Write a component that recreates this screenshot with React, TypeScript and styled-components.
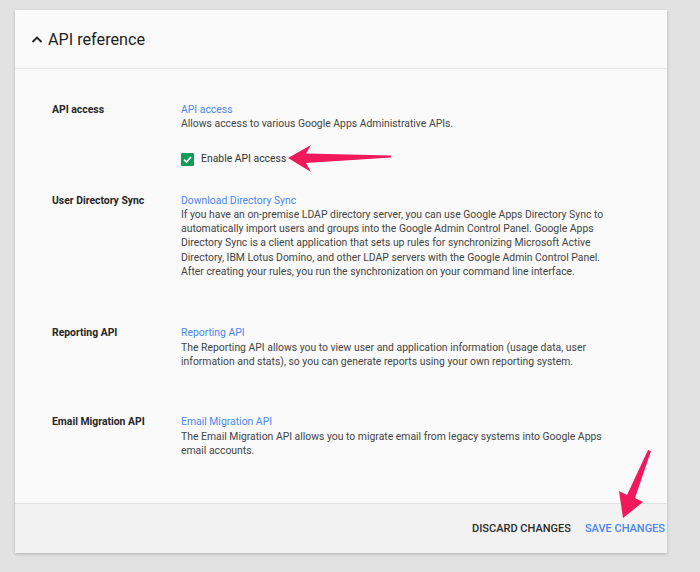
import React from "react";
import styled, { createGlobalStyle } from "styled-components";

const Global = createGlobalStyle`
  html, body { margin: 0; padding: 0; background: #e2e2e2; }
  body { font-family: Roboto, "Liberation Sans", Arial, sans-serif; }
`;

const Page = styled.div`
  position: relative;
  width: 700px;
  height: 572px;
  padding: 10px 33px 0 15px;
  box-sizing: border-box;
`;

const Card = styled.section`
  background: #fafafa;
  box-shadow: 0 1px 3px rgba(0, 0, 0, 0.22);
  display: flex;
  flex-direction: column;
`;

const Header = styled.header`
  height: 59px;
  display: flex;
  align-items: center;
  gap: 5px;
  padding: 1px 0 0 16px;
  border-bottom: 1px solid #e4e4e4;
  box-sizing: border-box;
`;

const Title = styled.h2`
  margin: 0;
  font-size: 16.2px;
  font-weight: 400;
  color: #212121;
`;

const Body = styled.div`
  padding: 34px 0 0 37px;
  display: flex;
  flex-direction: column;
`;

const Row = styled.div<{ $pad: number }>`
  display: grid;
  grid-template-columns: 129px 432px;
  padding-bottom: ${(p) => p.$pad}px;
  font-size: 10.4px;
  line-height: 14.3px;
`;

const Label = styled.div`
  font-weight: 700;
  color: #262626;
`;

const Content = styled.div`
  color: #444;
`;

const Link = styled.a`
  display: block;
  color: #4a86f0;
  text-decoration: none;
`;

const CheckRow = styled.label`
  display: flex;
  align-items: center;
  gap: 7px;
  height: 18px;
  margin-top: 19px;
  margin-bottom: -1px;
  color: #333;
`;

const Box = styled.span`
  width: 13px;
  height: 13px;
  background: #0f9d58;
  border-radius: 1px;
  display: flex;
  align-items: center;
  justify-content: center;
`;

const Footer = styled.footer`
  height: 50px;
  background: #f2f2f2;
  border-top: 1px solid #e2e2e2;
  box-sizing: border-box;
  display: flex;
  justify-content: flex-end;
  align-items: center;
  gap: 14px;
  padding-right: 2px;
`;

const Button = styled.button<{ $primary?: boolean }>`
  background: none;
  border: 0;
  padding: 0;
  font-family: Roboto, "Liberation Sans", Arial, sans-serif;
  font-size: 11px;
  font-weight: 500;
  text-transform: uppercase;
  color: ${(p) => (p.$primary ? "#4a86f0" : "#2a2a2a")};
`;

const Overlay = styled.svg`
  position: absolute;
  left: 0;
  top: 0;
  pointer-events: none;
`;

export default function App() {
  return (
    <Page>
      <Global />
      <Card>
        <Header>
          <svg width="12" height="12" viewBox="0 0 12 12">
            <path d="M1.5 8 L6 3.5 L10.5 8" fill="none" stroke="#222" strokeWidth="1.8" />
          </svg>
          <Title>API reference</Title>
        </Header>
        <Body>
          <Row $pad={26}>
            <Label>API access</Label>
            <Content>
              <Link href="#">API access</Link>
              Allows access to various Google Apps Administrative APIs.
              <CheckRow>
                <Box>
                  <svg width="11" height="11" viewBox="0 0 11 11">
                    <path d="M2 5.6 L4.4 8 L9 3" fill="none" stroke="#fff" strokeWidth="1.6" />
                  </svg>
                </Box>
                Enable API access
              </CheckRow>
            </Content>
          </Row>
          <Row $pad={47}>
            <Label>User Directory Sync</Label>
            <Content>
              <Link href="#">Download Directory Sync</Link>
              If you have an on-premise LDAP directory server, you can use Google Apps Directory Sync to
              automatically import users and groups into the Google Admin Control Panel. Google Apps
              Directory Sync is a client application that sets up rules for synchronizing Microsoft Active
              Directory, IBM Lotus Domino, and other LDAP servers with the Google Admin Control Panel.
              After creating your rules, you run the synchronization on your command line interface.
            </Content>
          </Row>
          <Row $pad={46}>
            <Label>Reporting API</Label>
            <Content>
              <Link href="#">Reporting API</Link>
              The Reporting API allows you to view user and application information (usage data, user
              information and stats), so you can generate reports using your own reporting system.
            </Content>
          </Row>
          <Row $pad={45}>
            <Label>Email Migration API</Label>
            <Content>
              <Link href="#">Email Migration API</Link>
              The Email Migration API allows you to migrate email from legacy systems into Google Apps
              email accounts.
            </Content>
          </Row>
        </Body>
        <Footer>
          <Button>Discard changes</Button>
          <Button $primary>Save changes</Button>
        </Footer>
      </Card>
      <Overlay width="700" height="572" viewBox="0 0 700 572">
        <polygon
          points="288,158 311,145 306,153.5 391,155.5 391,157.5 306,163 311,172"
          fill="#f2185c"
        />
        <polygon
          points="623,518 619,491 627,495 648,450 651,451 635,498 643,502"
          fill="#f2185c"
        />
      </Overlay>
    </Page>
  );
}
